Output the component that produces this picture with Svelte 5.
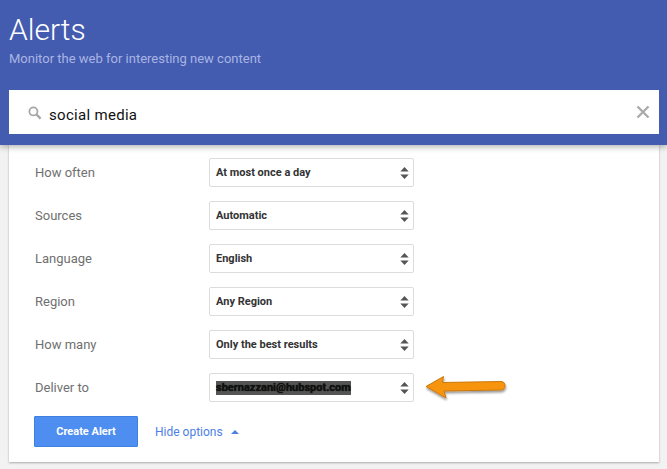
<script>
  const rows = [
    ['How often', 'At most once a day'],
    ['Sources', 'Automatic'],
    ['Language', 'English'],
    ['Region', 'Any Region'],
    ['How many', 'Only the best results'],
    ['Deliver to', 'sbernazzani@hubspot.com']
  ];
</script>

<div class="page">
  <header class="head">
    <h1>Alerts</h1>
    <p>Monitor the web for interesting new content</p>
    <div class="search">
      <svg class="glass" width="14" height="14" viewBox="0 0 16 16" aria-hidden="true">
        <circle cx="6.2" cy="6.2" r="4.6" fill="none" stroke="#a6a6a6" stroke-width="2" />
        <path d="M9.7 9.7 14.4 14.4" stroke="#a6a6a6" stroke-width="2.6" fill="none" />
      </svg>
      <span class="query">social media</span>
      <svg class="close" width="14" height="14" viewBox="0 0 14 14" aria-hidden="true">
        <path d="M1.5 1.5 12.5 12.5M12.5 1.5 1.5 12.5" stroke="#ababab" stroke-width="2.4" fill="none" />
      </svg>
    </div>
  </header>

  <main class="card">
    {#each rows as [label, value], i}
      <div class="row">
        <span class="label">{label}</span>
        <div class="select">
          <span class="value" class:redacted={i === 5}>{value}</span>
          <svg width="9" height="14" viewBox="0 0 9 14" aria-hidden="true">
            <path d="M4.5 1 8.7 5.600H.3ZM4.5 13 .3 8.400H8.700Z" fill="#555" />
          </svg>
        </div>
        {#if i === 5}
          <svg class="arrow" width="92" height="34" viewBox="0 0 92 34" aria-hidden="true">
            <defs>
              <filter id="sh" x="-10%" y="-20%" width="120%" height="150%">
                <feDropShadow dx="0.5" dy="2" stdDeviation="1.3" flood-color="#000" flood-opacity="0.4" />
              </filter>
            </defs>
            <path
              d="M3 15.500 20.500 5.500 19.500 11.500 78 10.500C83.500 10.500 83.500 19 78 19L21 20 23 27Z"
              fill="#f79410"
              stroke="#c9780f"
              stroke-width="1"
              stroke-linejoin="round"
              filter="url(#sh)"
            />
          </svg>
        {/if}
      </div>
    {/each}
    <div class="actions">
      <button class="create" type="button">Create Alert</button>
      <a class="toggle" href="#options">Hide options</a>
      <span class="caret"></span>
    </div>
  </main>
</div>

<style>
  :global(body) {
    margin: 0;
    background: #f2f2f2;
    font-family: Roboto, "Liberation Sans", sans-serif;
  }
  .page {
    width: 667px;
    height: 469px;
    overflow: hidden;
  }
  .head {
    position: relative;
    z-index: 1;
    box-sizing: border-box;
    height: 145px;
    padding: 13px 8px 0 9px;
    background: #435cb0;
    box-shadow: 0 2px 6px rgba(0, 0, 0, 0.3);
  }
  h1 {
    margin: 0;
    color: #fff;
    font-size: 30px;
    font-weight: 300;
    line-height: 34px;
  }
  .head p {
    margin: 3px 0 0;
    color: #a9b4e4;
    font-size: 13px;
    font-weight: 400;
    line-height: 18px;
  }
  .search {
    display: flex;
    align-items: center;
    height: 44px;
    margin-top: 22px;
    padding: 0 9px 0 19px;
    background: #fff;
  }
  .glass {
    flex: none;
    margin: 2px 7px 0 0;
  }
  .query {
    flex: 1;
    padding-top: 5px;
    color: #111;
    font-size: 15px;
    letter-spacing: 0.3px;
  }
  .close {
    flex: none;
  }
  .card {
    box-sizing: border-box;
    width: 650px;
    height: 317px;
    margin-left: 9px;
    padding-top: 13px;
    background: #fff;
    box-shadow: 0 1px 2px rgba(0, 0, 0, 0.3);
  }
  .row {
    position: relative;
    display: flex;
    align-items: center;
    height: 29px;
    margin-bottom: 14px;
    padding-left: 26px;
  }
  .label {
    width: 174px;
    color: #707070;
    font-size: 13px;
  }
  .select {
    box-sizing: border-box;
    display: flex;
    align-items: center;
    justify-content: space-between;
    width: 205px;
    height: 29px;
    padding: 0 4px 0 6px;
    border: 1px solid #dcdcdc;
    border-radius: 2px;
    background: #fff;
  }
  .value {
    color: #333;
    font-size: 11px;
    font-weight: 700;
    line-height: 14px;
  }
  .redacted {
    background: #555;
    color: #111;
    text-shadow: 0 0 1px #000;
  }
  .arrow {
    position: absolute;
    left: 414px;
    top: -2px;
  }
  .actions {
    display: flex;
    align-items: center;
    margin-top: 2px;
    padding-left: 25px;
  }
  .create {
    box-sizing: border-box;
    width: 104px;
    height: 31px;
    padding: 0;
    border: 1px solid #3f7fe0;
    border-radius: 1px;
    background: #4d8ef0;
    color: #fff;
    font-family: inherit;
    font-size: 11px;
    font-weight: 700;
  }
  .toggle {
    margin-left: 17px;
    color: #4d80e4;
    font-size: 12px;
    text-decoration: none;
  }
  .caret {
    width: 0;
    height: 0;
    margin-left: 8px;
    border-right: 4.500px solid transparent;
    border-bottom: 4.500px solid #4d80e4;
    border-left: 4.500px solid transparent;
  }
</style>
